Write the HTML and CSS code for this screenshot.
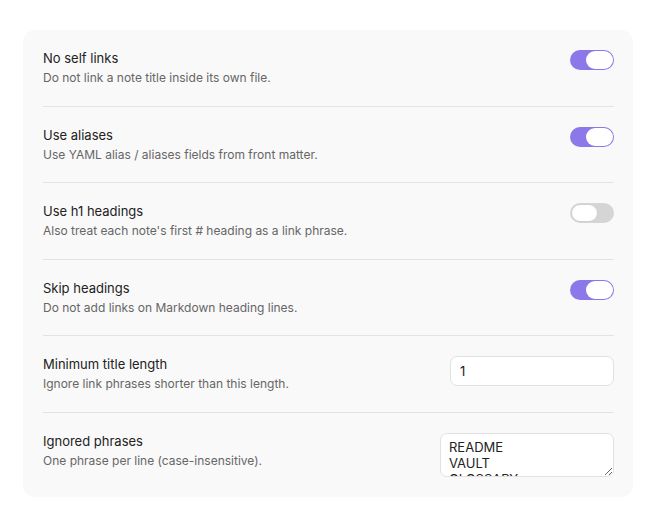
FILE: index.html
```html
<!DOCTYPE html>
<html>
<head>
    <title>Settings</title>
    <link rel="stylesheet" href="styles.css">
</head>
<body>
    <div class="settings-card">
        <div class="setting-item">
            <div class="info">
                <div class="name">No self links</div>
                <div class="desc">Do not link a note title inside its own file.</div>
            </div>
            <div class="toggle on"><div class="knob"></div></div>
        </div>
        <div class="setting-item">
            <div class="info">
                <div class="name">Use aliases</div>
                <div class="desc">Use YAML alias / aliases fields from front matter.</div>
            </div>
            <div class="toggle on"><div class="knob"></div></div>
        </div>
        <div class="setting-item">
            <div class="info">
                <div class="name">Use h1 headings</div>
                <div class="desc">Also treat each note's first # heading as a link phrase.</div>
            </div>
            <div class="toggle"><div class="knob"></div></div>
        </div>
        <div class="setting-item">
            <div class="info">
                <div class="name">Skip headings</div>
                <div class="desc">Do not add links on Markdown heading lines.</div>
            </div>
            <div class="toggle on"><div class="knob"></div></div>
        </div>
        <div class="setting-item">
            <div class="info">
                <div class="name">Minimum title length</div>
                <div class="desc">Ignore link phrases shorter than this length.</div>
            </div>
            <input class="text-input" type="text" value="1">
        </div>
        <div class="setting-item">
            <div class="info">
                <div class="name">Ignored phrases</div>
                <div class="desc">One phrase per line (case-insensitive).</div>
            </div>
            <textarea class="text-area">README
VAULT
GLOSSARY</textarea>
        </div>
    </div>
</body>
</html>
```

FILE: styles.css
```css
body {
    font-family: Inter, "Noto Sans", sans-serif;
    background-color: #ffffff;
    color: #222222;
    margin: 0;
    padding: 30px 25px 0 23px;
}
.settings-card {
    background-color: #f9f9f9;
    border-radius: 12px;
    padding: 0 19px 0 20px;
    width: 571px;
}
.setting-item {
    display: flex;
    justify-content: space-between;
    align-items: flex-start;
    padding: 19px 0 18.5px;
    border-bottom: 1px solid #e3e3e3;
}
.setting-item:last-child {
    border-bottom: none;
    padding-bottom: 20px;
}
.name {
    font-size: 13px;
    line-height: 18px;
    color: #222222;
}
.desc {
    font-size: 12px;
    line-height: 18px;
    margin-top: 2px;
    color: #666666;
}
.toggle {
    width: 44px;
    height: 20px;
    border-radius: 10px;
    background-color: #d5d5d5;
    margin-top: 1px;
    padding: 1px;
    box-sizing: border-box;
    display: flex;
    justify-content: flex-start;
}
.toggle.on {
    background-color: #8c78e8;
    justify-content: flex-end;
}
.knob {
    width: 27px;
    height: 18px;
    border-radius: 9px;
    background-color: #ffffff;
    box-sizing: border-box;
}
.toggle:not(.on) .knob {
    border: 1px solid #cfcfcf;
}
.text-input {
    width: 164px;
    height: 30px;
    box-sizing: border-box;
    margin: 1px 0 0 0;
    border: 1px solid #e1e1e1;
    border-radius: 7px;
    background-color: #ffffff;
    padding: 0 9px;
    font-family: Inter, "Noto Sans", sans-serif;
    font-size: 13px;
    color: #222222;
    outline: none;
}
.text-area {
    width: 174px;
    height: 44px;
    box-sizing: border-box;
    margin: 1px 0 0 0;
    border: 1px solid #e1e1e1;
    border-radius: 7px;
    background-color: #ffffff;
    padding: 5px 8px 0;
    font-family: Inter, "Noto Sans", sans-serif;
    font-size: 13px;
    line-height: 16px;
    color: #222222;
    overflow: hidden;
    resize: vertical;
    outline: none;
}
```
